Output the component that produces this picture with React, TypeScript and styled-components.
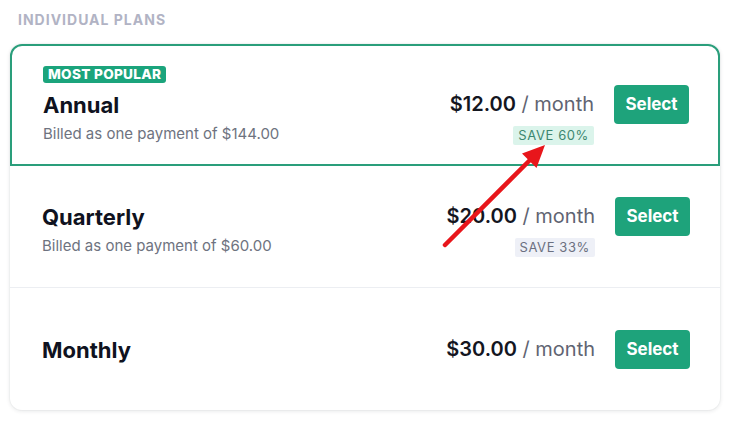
import React from "react";
import styled, { createGlobalStyle } from "styled-components";

const GlobalStyle = createGlobalStyle`
  body {
    margin: 0;
    background: #ffffff;
    font-family: Inter, "Noto Sans", "Liberation Sans", sans-serif;
    -webkit-font-smoothing: antialiased;
  }
`;

const Page = styled.div`
  position: relative;
  width: 731px;
  height: 427px;
  padding: 10px 11px 0 10px;
  box-sizing: border-box;
  overflow: hidden;
`;

const Heading = styled.h2`
  margin: 0 0 15px 8px;
  font-size: 14px;
  line-height: 19px;
  font-weight: 700;
  letter-spacing: 1px;
  color: #b1b3c4;
  text-transform: uppercase;
`;

const Card = styled.div`
  background: #fff;
  border-radius: 12px;
  box-shadow: 0 1px 4px rgba(20, 24, 40, 0.11), 0 0 0 1px rgba(20, 24, 40, 0.025);
`;

const Row = styled.div<{ $active?: boolean; $divider?: boolean }>`
  box-sizing: border-box;
  height: 122px;
  display: flex;
  flex-direction: column;
  justify-content: center;
  padding: 0 30px 0 32px;
  border: ${p => (p.$active ? "2px solid #2a9e7b" : "none")};
  border-radius: ${p => (p.$active ? "12px 12px 0 0" : "0")};
  ${p => p.$active && "padding: 0 29px 0 31px;"}
  border-bottom: ${p => (p.$divider ? "1px solid #eceef2" : p.$active ? "2px solid #2a9e7b" : "none")};
`;

const Popular = styled.span`
  align-self: flex-start;
  background: #1ba47c;
  color: #fff;
  font-size: 13.6px;
  font-weight: 800;
  letter-spacing: 0.3px;
  line-height: 17px;
  padding: 0 5px;
  border-radius: 3px;
  margin-bottom: 2px;
`;

const Main = styled.div`
  display: flex;
  justify-content: space-between;
  align-items: flex-start;
`;

const Info = styled.div`
  padding-top: 7px;
`;

const Title = styled.div`
  font-size: 22px;
  line-height: 27px;
  font-weight: 700;
  color: #0f1220;
`;

const Billed = styled.div`
  margin-top: 5px;
  font-size: 15px;
  line-height: 19px;
  color: #6e7380;
`;

const Pricing = styled.div`
  display: grid;
  grid-template-columns: auto auto;
  column-gap: 20px;
  row-gap: 2px;
  align-items: center;
`;

const Price = styled.div`
  font-size: 20px;
  color: #5f6472;
  white-space: nowrap;
  b {
    font-weight: 600;
    color: #14161f;
  }
`;

const SelectButton = styled.button`
  width: 75px;
  height: 39px;
  border: none;
  border-radius: 4px;
  background: #1ea37b;
  color: #fff;
  font-family: inherit;
  font-size: 17px;
  font-weight: 700;
  cursor: pointer;
`;

const Save = styled.span<{ $hot?: boolean }>`
  grid-column: 1;
  justify-self: end;
  padding: 0 5px;
  line-height: 19px;
  font-size: 13px;
  letter-spacing: 0.6px;
  border-radius: 2px;
  background: ${p => (p.$hot ? "#dbf4eb" : "#eef0f7")};
  color: ${p => (p.$hot ? "#3d8770" : "#6b7080")};
`;

const Arrow = styled.svg`
  position: absolute;
  left: 0;
  top: 0;
  pointer-events: none;
`;

type Plan = { name: string; price: string; billed?: string; save?: string; popular?: boolean };

const plans: Plan[] = [
  { name: "Annual", price: "$12.00", billed: "Billed as one payment of $144.00", save: "SAVE 60%", popular: true },
  { name: "Quarterly", price: "$20.00", billed: "Billed as one payment of $60.00", save: "SAVE 33%" },
  { name: "Monthly", price: "$30.00" },
];

export default function App(): JSX.Element {
  return (
    <Page>
      <GlobalStyle />
      <Heading>Individual Plans</Heading>
      <Card>
        {plans.map((p, i) => (
          <Row key={p.name} $active={p.popular} $divider={i === 1}>
            {p.popular && <Popular>MOST POPULAR</Popular>}
            <Main>
              <Info>
                <Title>{p.name}</Title>
                {p.billed && <Billed>{p.billed}</Billed>}
              </Info>
              <Pricing>
                <Price>
                  <b>{p.price}</b> / month
                </Price>
                <SelectButton>Select</SelectButton>
                {p.save && <Save $hot={p.popular}>{p.save}</Save>}
              </Pricing>
            </Main>
          </Row>
        ))}
      </Card>
      <Arrow width='731' height='427' viewBox='0 0 731 427'>
        <line x1='445' y1='245' x2='530' y2='160' stroke='#e8161b' strokeWidth='4.5' strokeLinecap='round' />
        <polygon points='545,145 522,153.5 536.5,168' fill='#e8161b' />
      </Arrow>
    </Page>
  );
}
